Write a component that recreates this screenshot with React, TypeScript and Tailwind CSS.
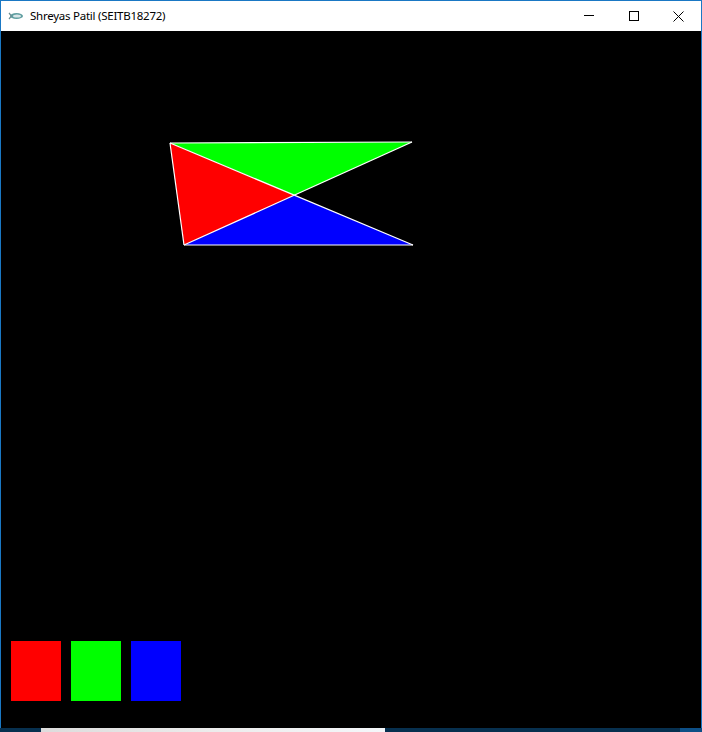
import React from 'react';

const pts = {
    a: [169, 112],
    b: [411, 111],
    c: [293.3, 164.2],
    d: [183, 214],
    e: [412, 214],
};

const poly = (...keys: (keyof typeof pts)[]) => keys.map((k) => pts[k].join(',')).join(' ');

const AppIcon = () => (
    <svg width="16" height="10" viewBox="0 0 16 10" className="shrink-0">
        <ellipse cx="8.5" cy="5" rx="6.5" ry="3" fill="#5f9ea0" />
        <ellipse cx="9" cy="5" rx="4" ry="1.6" fill="#d8e6e8" />
        <path d="M1 2 L3.5 5 L1 8" stroke="#6a8f94" strokeWidth="1.2" fill="none" />
    </svg>
);

const TitleButtons = () => (
    <div className="flex h-full">
        <div className="w-[45px] h-full flex items-center justify-center">
            <svg width="10" height="10" viewBox="0 0 10 10" shapeRendering="crispEdges">
                <line x1="0" y1="4.5" x2="10" y2="4.5" stroke="#000" strokeWidth="1" />
            </svg>
        </div>
        <div className="w-[45px] h-full flex items-center justify-center">
            <svg width="10" height="10" viewBox="0 0 10 10" shapeRendering="crispEdges">
                <rect x="0.5" y="0.5" width="9" height="9" stroke="#000" strokeWidth="1" fill="none" />
            </svg>
        </div>
        <div className="w-[45px] h-full flex items-center justify-center">
            <svg width="11" height="11" viewBox="0 0 11 11">
                <path d="M0.5 0.5 L10.5 10.5 M10.5 0.5 L0.5 10.5" stroke="#000" strokeWidth="1" fill="none" />
            </svg>
        </div>
    </div>
);

export default function App() {
    return (
        <div className="w-[702px] h-[732px] flex flex-col bg-black overflow-hidden" style={{ fontFamily: '"Segoe UI", "Noto Sans", sans-serif' }}>
            <div className="flex-1 flex flex-col border-x border-t border-[#1a78c4] min-h-0">
                {/* title bar */}
                <div className="h-[30px] bg-white flex items-center justify-between shrink-0">
                    <div className="flex items-center gap-[6px] pl-[7px]">
                        <AppIcon />
                        <span className="text-[11.5px] text-black leading-none tracking-[-0.25px] pb-[1px]">Shreyas Patil (SEITB18272)</span>
                    </div>
                    <TitleButtons />
                </div>

                {/* canvas */}
                <div className="flex-1 bg-black flex flex-col justify-between">
                    <svg width="700" height="240" viewBox="0 0 700 240" className="block">
                        <polygon points={poly('a', 'b', 'c')} fill="#00ff00" />
                        <polygon points={poly('a', 'c', 'd')} fill="#ff0000" />
                        <polygon points={poly('c', 'd', 'e')} fill="#0000ff" />
                        <g stroke="#ffffff" strokeWidth="1.2" fill="none">
                            <line x1={169} y1={112} x2={411} y2={111} />
                            <line x1={169} y1={112} x2={183} y2={214} />
                            <line x1={183} y1={214} x2={412} y2={214} />
                            <line x1={169} y1={112} x2={412} y2={214} />
                            <line x1={411} y1={111} x2={183} y2={214} />
                        </g>
                    </svg>
                    <div className="flex gap-[10px] pl-[10px] mb-[27px]">
                        <div className="w-[50px] h-[60px] bg-[#ff0000]" />
                        <div className="w-[50px] h-[60px] bg-[#00ff00]" />
                        <div className="w-[50px] h-[60px] bg-[#0000ff]" />
                    </div>
                </div>
            </div>

            {/* taskbar strip beneath */}
            <div className="h-[4px] flex shrink-0 bg-[#07304f]">
                <div className="w-[41px]" />
                <div className="w-[344px] bg-gradient-to-r from-[#dcdcdc] via-[#ececec] to-[#f4f7fa]" />
                <div className="flex-1" />
                <div className="w-[22px] bg-[#0d4f86]" />
            </div>
        </div>
    );
}
